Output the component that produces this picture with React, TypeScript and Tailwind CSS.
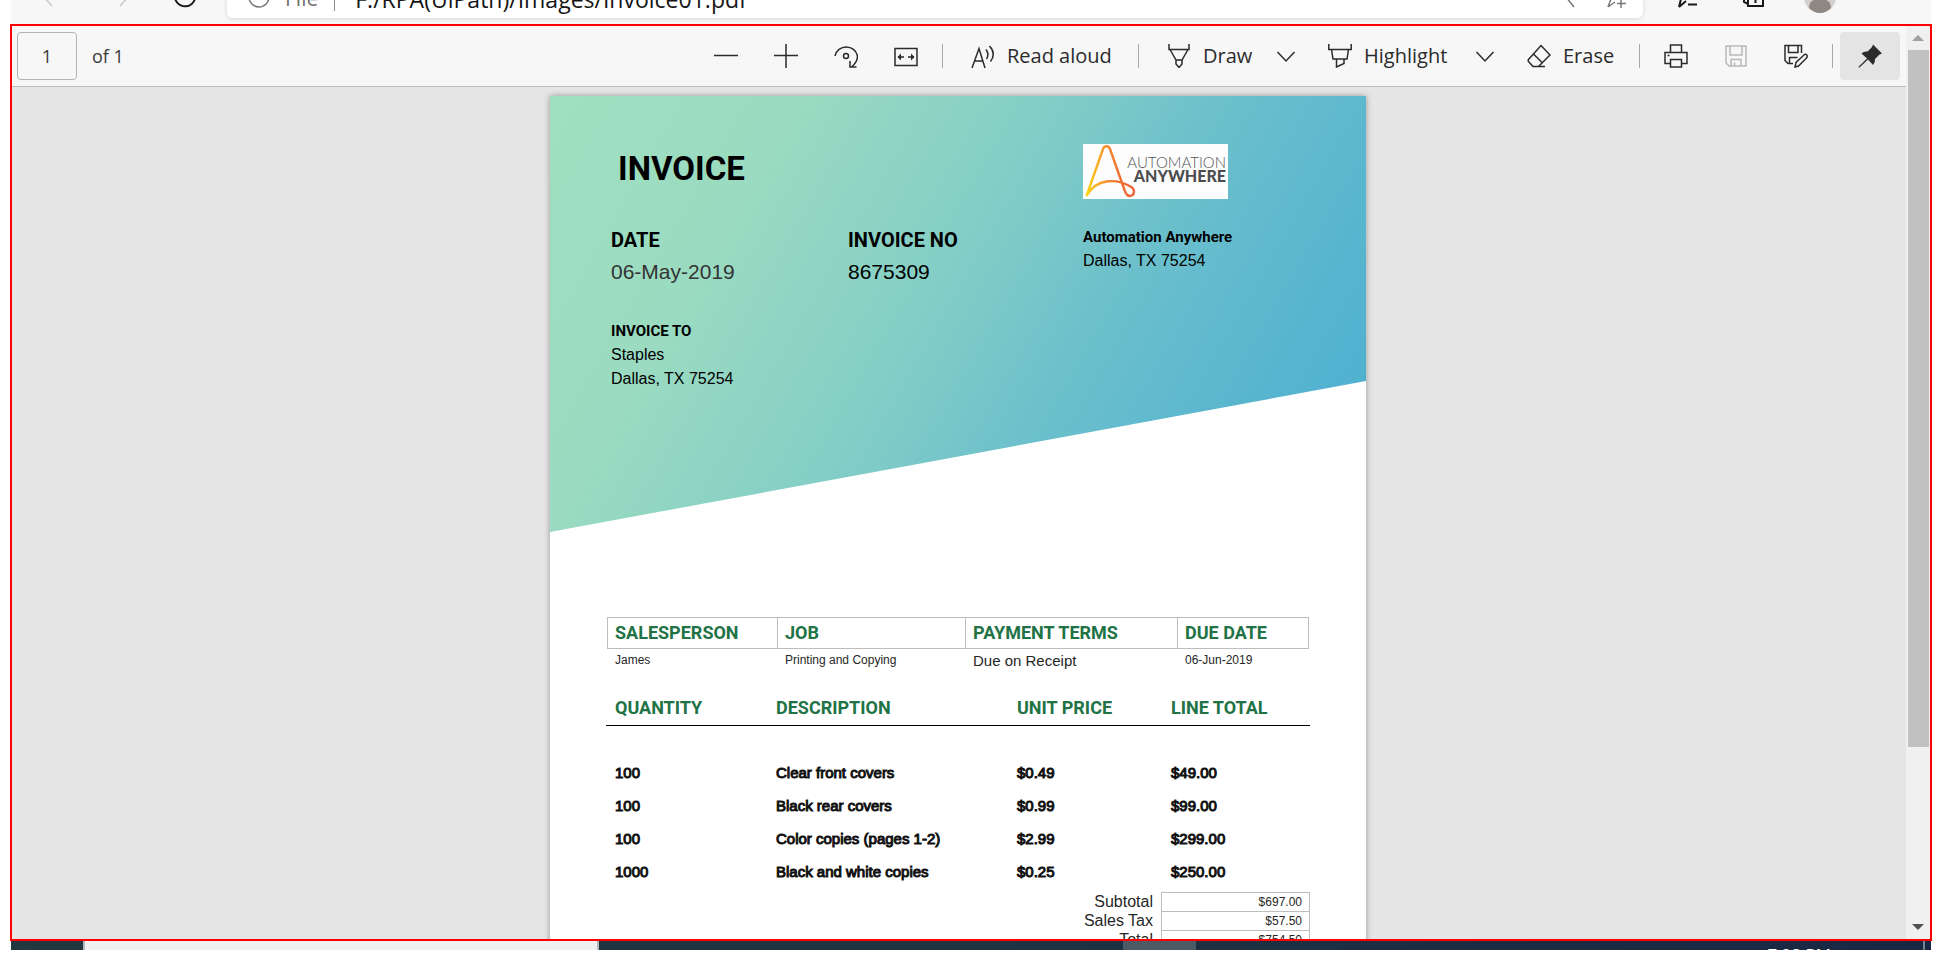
import type { ReactNode } from "react";

const line = {
  fill: "none",
  stroke: "currentColor",
  strokeWidth: 1.5,
} as const;

function Icon({ children, size = 24, label }: { children: ReactNode; size?: number; label?: string }) {
  return (
    <svg
      width={size}
      height={size}
      viewBox={`0 0 ${size} ${size}`}
      className="shrink-0"
      aria-label={label}
      aria-hidden={label ? undefined : true}
      {...line}
    >
      {children}
    </svg>
  );
}

function ToolButton({ label, children, className = "" }: { label: string; children: ReactNode; className?: string }) {
  return (
    <button type="button" aria-label={label} className={`flex h-12 w-[60px] shrink-0 items-center justify-center rounded ${className}`}>
      {children}
    </button>
  );
}

function TextButton({ label, children, width }: { label: string; children: ReactNode; width: string }) {
  return (
    <button type="button" className={`flex h-12 shrink-0 items-center gap-3 pl-[22px] text-[20px] whitespace-nowrap ${width}`}>
      {children}
      <span>{label}</span>
    </button>
  );
}

function ChevronButton({ label }: { label: string }) {
  return (
    <button type="button" aria-label={label} className="flex h-12 w-10 shrink-0 items-center justify-center">
      <Icon>
        <path d="M3.5 8 L12 17 L20.5 8" />
      </Icon>
    </button>
  );
}

function Separator() {
  return (
    <div className="flex w-[13px] shrink-0 justify-center">
      <div className="h-6 w-px bg-[#a8a8a8]" />
    </div>
  );
}

function BrowserBar() {
  return (
    <div className="mx-px flex h-6 shrink-0 flex-col justify-end overflow-hidden bg-[#f7f7f7]">
      <div className="mb-[6px] flex h-[42px] shrink-0 items-center font-['Open_Sans','Noto_Sans',sans-serif]">
        <div className="flex w-[216px] shrink-0 items-center pl-[26px] text-[#c9c9c9]">
          <button type="button" aria-label="Back" className="flex w-[74px] shrink-0">
            <Icon><path d="M15 3 L7 12 L15 21" /></Icon>
          </button>
          <button type="button" aria-label="Forward" className="flex w-[62px] shrink-0">
            <Icon><path d="M9 3 L17 12 L9 21" /></Icon>
          </button>
          <button type="button" aria-label="Refresh" className="flex text-[#1a1a1a]">
            <Icon><path strokeWidth={2} d="M19 5 A10 9.5 0 1 0 22 11 M19 1 V5 H14" /></Icon>
          </button>
        </div>
        <div className="flex h-[42px] flex-1 items-center rounded-md bg-white pl-5 shadow-[0_1px_5px_rgba(0,0,0,0.12)]">
          <span className="flex text-[#777]">
            <Icon><circle cx="12" cy="12" r="10" /><path d="M12 10 V15 M12 6 V8" /></Icon>
          </span>
          <span className="pt-1 pl-3.5 text-[21px] text-[#707070]">File</span>
          <span className="ml-4 h-7 w-px bg-[#8a8a8a]" />
          <input
            aria-label="Address"
            readOnly
            value="F:/RPA(UiPath)/Images/Invoice01.pdf"
            className="ml-5 min-w-0 flex-1 bg-transparent pt-1 text-[23px] text-[#151515] outline-none"
          />
          <button type="button" aria-label="Search" className="mr-[26px] flex text-[#777]">
            <Icon><circle cx="9" cy="7" r="6" /><path d="M13 12 L21 22" /></Icon>
          </button>
          <button type="button" aria-label="Add to favorites" className="mr-4 flex text-[#777]">
            <Icon><path d="M5 22 L8 14 L2 9 H9 L12 2 L15 9 H22 L17 13 M5 22 L12 17 M18 14 V23 M14 18.500 H23" /></Icon>
          </button>
        </div>
        <div className="flex w-[288px] shrink-0 items-center pl-8 text-[#1a1a1a]">
          <button type="button" aria-label="Favorites" className="flex w-[66px]">
            <Icon><path strokeWidth={2} d="M4 22 L6 14 L2 9 H8 L10 2 L13 9 H22 M4 22 L11 16 M14 14 H22 M13 19.500 H22" /></Icon>
          </button>
          <button type="button" aria-label="Collections" className="flex w-[63px]">
            <Icon><path strokeWidth={2} d="M7 5 H22 V21 H7 Z M3 2 V17 L7 19 M14.500 10 V18 M11 14 H18" /></Icon>
          </button>
          <button type="button" aria-label="Profile" className="flex">
            <svg width="32" height="32" viewBox="0 0 32 32" aria-hidden="true">
              <circle cx="16" cy="16" r="16" fill="#d4d0ce" />
              <circle cx="16" cy="11" r="6" fill="#8d8884" />
              <path d="M5 27 Q5 18 16 18 Q27 18 27 27 Q22 32 16 32 Q10 32 5 27Z" fill="#8d8884" />
            </svg>
          </button>
        </div>
      </div>
    </div>
  );
}

function Toolbar() {
  return (
    <div className="flex h-[61px] shrink-0 items-center justify-between border-b border-[#bdbdbd] bg-[#f7f7f7] pr-[6px] pl-[5px] font-['Open_Sans','Noto_Sans',sans-serif] text-[#3a3a3a]">
      <label className="flex items-center gap-[15px] text-[18px]">
        <input
          aria-label="Page number"
          defaultValue="1"
          className="h-12 w-[60px] rounded border border-[#b4b4b4] bg-transparent text-center outline-none"
        />
        <span>of 1</span>
      </label>
      <div className="flex items-center text-[#2b2b2b]">
        <ToolButton label="Zoom out"><Icon><path d="M0 11.500 H24" /></Icon></ToolButton>
        <ToolButton label="Zoom in"><Icon><path d="M0 11.500 H24 M12 0 V24" /></Icon></ToolButton>
        <ToolButton label="Rotate">
          <Icon>
            <path d="M1 12 A11.500 11.500 0 0 1 23.500 12 Q23.500 18 18 22.500 M16 17 V23 H22.500" />
            <circle cx="12" cy="12" r="2.5" />
          </Icon>
        </ToolButton>
        <ToolButton label="Fit to width">
          <Icon>
            <path d="M1 4.500 H23 V21.500 H1 Z M4 13 H10 M14 13 H20" />
            <path d="M7 9.500 L3.500 13 L7 16.500Z M17 9.500 L20.500 13 L17 16.500Z" fill="currentColor" stroke="none" />
          </Icon>
        </ToolButton>
        <Separator />
        <TextButton label="Read aloud" width="w-[183px]">
          <Icon><path d="M1 24 L8 4.500 L14 24 M3.500 17 H12 M15 5.500 Q18.500 10 15.500 15 M18.500 2 Q25.500 9.500 19.500 17.500" /></Icon>
        </TextButton>
        <Separator />
        <TextButton label="Draw" width="w-[121px]">
          <Icon><path d="M2 0 V5.500 H22 V0 M3 5.500 L9 16 H15 L21 5.500 M9 16 V20 L12 23.500 L15 20 V16" /></Icon>
        </TextButton>
        <ChevronButton label="Draw options" />
        <TextButton label="Highlight" width="w-[159px]">
          <Icon><path d="M0.800 0 V5.500 H23.200 V0 M3.500 5.500 L5 15 H19 L20.500 5.500 M8.500 15 V23 L16 19.500 V15" /></Icon>
        </TextButton>
        <ChevronButton label="Highlight options" />
        <TextButton label="Erase" width="w-[128px]">
          <Icon><path d="M14 1.500 L23 11 L11.500 22.500 H6 L1.500 17.500 Q0.800 16.500 1.500 15.500 Z M6.500 10 L15.500 19 M6 22.500 H18" /></Icon>
        </TextButton>
        <Separator />
        <ToolButton label="Print">
          <Icon><path d="M6.500 8 V1 H17.500 V8 M6 19.500 H1 V8.500 H23 V19.500 H18 M6.500 15.500 H17.500 V23 H6.500 Z" /><path d="M3.500 11.500 H5.500" /></Icon>
        </ToolButton>
        <ToolButton label="Save" className="text-[#b9b9b9]">
          <Icon><path d="M2 2 H22 V22 H5 L2 19 Z M6 2 V11 H18 V2 M7 22 V15.500 H17 V22 M10.500 22 V18.500" /></Icon>
        </ToolButton>
        <ToolButton label="Save as">
          <Icon><path d="M9 19.500 H4 L1 16.500 V1.500 H17.500 V9 M4.500 1.500 V8.500 H14 V1.500 M5.500 19.500 V13.500 H13.500" /><path d="M11 23 L12 18.500 L20.500 10.500 Q22.500 9.500 23.200 12 L23 13.500 L14.500 22 Z" /></Icon>
        </ToolButton>
        <Separator />
        <ToolButton label="Pin toolbar" className="ml-px bg-[#e4e4e4]">
          <Icon>
            <path fill="currentColor" stroke="none" d="M15 0.500 L24 9.500 L21.500 10.500 L17 15 Q17.500 18.500 15 21 L10 15.500 L1.500 23.500 L0.500 23.500 L0.800 22.500 L9 14.500 L3.500 9.500 Q6 7 9.500 7.500 L14 3 Z" />
          </Icon>
        </ToolButton>
      </div>
    </div>
  );
}

function CompanyLogo() {
  return (
    <svg width="145" height="55" viewBox="0 0 145 55" role="img" aria-label="Automation Anywhere logo">
      <defs>
        <linearGradient id="stroke" x1="0" x2="1" y1="0" y2="0">
          <stop offset="0" stopColor="#fbd514" />
          <stop offset="0.35" stopColor="#f8982f" />
          <stop offset="0.65" stopColor="#ef7430" />
          <stop offset="1" stopColor="#f2633c" />
        </linearGradient>
      </defs>
      <rect width="145" height="55" fill="#fdfdfd" />
      <path
        d="M3.500 52 L20 5 Q21 2.300 23.500 2.300 Q26 2.300 27 5 L41.500 46 Q43.500 52 47 52 Q51 51.500 51 47.500 Q51 44.500 47.500 42.500 C35 35 14 33 3.500 52"
        fill="none"
        stroke="url(#stroke)"
        strokeWidth="2.400"
        strokeLinejoin="round"
      />
      <text x="143" y="24" textAnchor="end" fill="#555" fontFamily="Lato, sans-serif" fontWeight="300" fontSize="15">AUTOMATION</text>
      <text x="143" y="38" textAnchor="end" fill="#4d4d4f" fontFamily="Lato, sans-serif" fontWeight="900" fontSize="16">ANYWHERE</text>
    </svg>
  );
}

const jobHead = "h-8 border-y border-r border-[#bdbdbd] px-[7px] text-left align-middle font-['Roboto',sans-serif] text-[18px] leading-6 font-bold text-[#217346]";
const itemHead = "h-9 border-b border-black pl-[9px] text-left align-middle font-['Roboto',sans-serif] text-[18px] leading-6 font-bold text-[#217346]";
const itemCell = "h-[33px] pl-[9px] align-middle";

const items = [
  ["100", "Clear front covers", "$0.49", "$49.00"],
  ["100", "Black rear covers", "$0.99", "$99.00"],
  ["100", "Color copies (pages 1-2)", "$2.99", "$299.00"],
  ["1000", "Black and white copies", "$0.25", "$250.00"],
];

const totals = [
  ["Subtotal", "$697.00"],
  ["Sales Tax", "$57.50"],
  ["Total", "$754.50"],
];

function Invoice() {
  return (
    <article className="w-[816px] shrink-0 bg-white font-['Liberation_Sans',Arial,sans-serif] text-black shadow-[0_0_6px_rgba(0,0,0,0.35)]">
      <header className="h-[436px] bg-[linear-gradient(120deg,#a0e0c0_0%,#9adbc1_23%,#84cec6_46%,#6ec1cb_62%,#5eb8ce_76%,#50b1d0_92%)] pt-12 pl-[61px] [clip-path:polygon(0_0,100%_0,100%_285px,0_100%)]">
        <div className="grid grid-cols-[472px_1fr]">
          <h1 className="pl-[7px] font-['Roboto',sans-serif] text-[33px] leading-[50px] font-bold">INVOICE</h1>
          <CompanyLogo />
        </div>
        <div className="mt-[26px] grid grid-cols-[237px_235px_1fr]">
          <div className="pt-px">
            <h2 className="font-['Roboto',sans-serif] text-[20px] leading-7 font-bold">DATE</h2>
            <p className="text-[21px] leading-9 text-[#333]">06-May-2019</p>
          </div>
          <div className="pt-px">
            <h2 className="font-['Roboto',sans-serif] text-[20px] leading-7 font-bold">INVOICE NO</h2>
            <p className="text-[21px] leading-9">8675309</p>
          </div>
          <div className="text-[16px] leading-6">
            <h2 className="font-['Roboto',sans-serif] text-[15px] font-bold">Automation Anywhere</h2>
            <p>Dallas, TX 75254</p>
          </div>
        </div>
        <div className="mt-[29px] text-[16px] leading-6">
          <h2 className="font-['Roboto',sans-serif] text-[15px] font-bold">INVOICE TO</h2>
          <p>Staples</p>
          <p>Dallas, TX 75254</p>
        </div>
      </header>

      <div className="px-14 pt-[85px] pb-40">
        <div className="px-px">
          <table className="w-full table-fixed border-separate border-spacing-0">
            <colgroup>
              <col className="w-[171px]" />
              <col className="w-[188px]" />
              <col className="w-[212px]" />
              <col />
            </colgroup>
            <thead>
              <tr>
                <th className={`${jobHead} border-l`}>SALESPERSON</th>
                <th className={jobHead}>JOB</th>
                <th className={jobHead}>PAYMENT TERMS</th>
                <th className={jobHead}>DUE DATE</th>
              </tr>
            </thead>
            <tbody>
              <tr className="text-[12px] leading-[22px] text-[#262626]">
                <td className="h-6 pl-2 align-top">James</td>
                <td className="h-6 pl-[7px] align-top">Printing and Copying</td>
                <td className="h-6 pl-[7px] align-top text-[15px] leading-6">Due on Receipt</td>
                <td className="h-6 pl-[7px] align-top">06-Jun-2019</td>
              </tr>
            </tbody>
          </table>
        </div>

        <table className="mt-[17px] w-full table-fixed border-separate border-spacing-0">
          <colgroup>
            <col className="w-[161px]" />
            <col className="w-[241px]" />
            <col className="w-[154px]" />
            <col />
          </colgroup>
          <thead>
            <tr>
              <th className={itemHead}>QUANTITY</th>
              <th className={itemHead}>DESCRIPTION</th>
              <th className={itemHead}>UNIT PRICE</th>
              <th className={itemHead}>LINE TOTAL</th>
            </tr>
          </thead>
          <tbody className="text-[15px] leading-5 text-[#111] [-webkit-text-stroke:1px_#111]">
            <tr>
              <td colSpan={4} className="h-[30px] p-0" />
            </tr>
            {items.map((row) => (
              <tr key={row[1]}>
                {row.map((cell, i) => (
                  <td key={i} className={itemCell}>{cell}</td>
                ))}
              </tr>
            ))}
          </tbody>
        </table>

        <table className="mt-1 ml-auto border-separate border-spacing-0 border-b border-[#bdbdbd] text-right text-[#262626]">
          <tbody>
            {totals.map(([name, value]) => (
              <tr key={name}>
                <th scope="row" className="h-[19px] py-0 pr-2 text-[16px] leading-[18px] font-normal">{name}</th>
                <td className="h-[19px] w-[149px] border-x border-t border-[#bdbdbd] py-0 pr-[7px] text-[12px] leading-[18px]">{value}</td>
              </tr>
            ))}
          </tbody>
        </table>
      </div>
    </article>
  );
}

function Scrollbar() {
  return (
    <div className="flex w-6 shrink-0 flex-col bg-[#f0f0f0]" aria-hidden="true">
      <div className="flex h-6 shrink-0 items-center justify-center">
        <svg width="12" height="6" viewBox="0 0 12 6"><path d="M0 6 L6 0 L12 6Z" fill="#a0a0a0" /></svg>
      </div>
      <div className="flex min-h-0 flex-1 flex-col pr-px pl-[2px]">
        <div className="grow-[29] basis-0 bg-[#c1c1c1]" />
        <div className="grow-[7] basis-0" />
      </div>
      <div className="flex h-6 shrink-0 items-center justify-center">
        <svg width="12" height="6" viewBox="0 0 12 6"><path d="M0 0 L6 6 L12 0Z" fill="#505050" /></svg>
      </div>
    </div>
  );
}

function Taskbar() {
  return (
    <div className="mx-px flex h-[9px] shrink-0 items-start overflow-hidden bg-gradient-to-r from-[#22373f] via-[#1f3341] to-[#1a2744]">
      <div className="ml-[72px] h-full w-[516px] border-x-2 border-[#b5b9bb] bg-[#f0f0f0]" />
      <div className="ml-[524px] h-full w-[73px] bg-[#4c5a66]" />
      <div className="mt-1 mr-[92px] ml-auto font-['Open_Sans',sans-serif] text-[17px] leading-5 text-white">7:28 PM</div>
      <div className="mr-[6px] h-full w-[2px] shrink-0 bg-[#76808e]" />
    </div>
  );
}

export default function App() {
  return (
    <div className="flex h-screen flex-col overflow-hidden bg-white px-[10px] pb-[15px]">
      <BrowserBar />
      <main className="flex min-h-0 flex-1 border-2 border-[#ff0000]">
        <div className="flex min-w-0 flex-1 flex-col">
          <Toolbar />
          <div className="flex min-h-0 flex-1 items-start justify-center overflow-hidden bg-[#e5e5e5] pt-[9px] pr-[2px]">
            <Invoice />
          </div>
        </div>
        <Scrollbar />
      </main>
      <Taskbar />
    </div>
  );
}
